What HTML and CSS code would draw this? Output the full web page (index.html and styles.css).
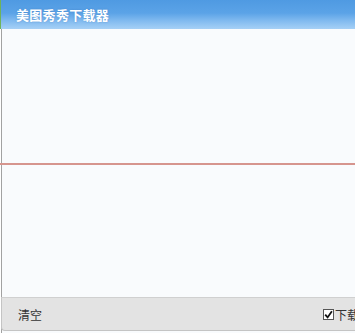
FILE: index.html
```html
<!DOCTYPE html>
<html lang="zh">
<head>
<meta charset="utf-8">
<title>美图秀秀下载器</title>
<link rel="stylesheet" href="styles.css">
</head>
<body>
<div class="window">
  <div class="titlebar"><span class="title">美图秀秀下载器</span></div>
  <div class="content">
    <div class="pane-top"></div>
    <div class="divider"></div>
    <div class="pane-bottom"></div>
    <div class="footer">
      <span class="clear">清空</span>
      <label class="opt"><span class="check"><svg width="9" height="9" viewBox="0 0 9 9"><path d="M1.2 4.6 L3.6 7.4 L7.9 1.2" fill="none" stroke="#111" stroke-width="1.8"/></svg></span><span class="opt-text">下载</span></label>
    </div>
  </div>
</div>
</body>
</html>
```
FILE: styles.css
```css
* { box-sizing: border-box; }
html, body { margin: 0; padding: 0; background: #ffffff; }
body { width: 355px; height: 333px; overflow: hidden; font-family: "Noto Sans CJK SC", "Noto Sans", sans-serif; }
.window { height: 333px; display: flex; flex-direction: column; overflow: hidden; }
.titlebar {
  height: 29px;
  flex-shrink: 0;
  display: flex;
  align-items: center;
  padding-left: 15px;
  border-left: 1px solid #6fb35a;
  background: linear-gradient(to bottom, #4f9ae2 0%, #5ba3e7 45%, #7fb9ef 70%, #a6d0f6 100%);
}
.title { color: #ffffff; font-size: 13px; font-weight: bold; letter-spacing: 0.3px; text-shadow: 0 0 2px rgba(40,90,160,0.4); }
.content {
  flex: 1;
  display: flex;
  flex-direction: column;
  margin-left: 1px;
  border-left: 1px solid #a2a2a2;
  background: #f9fbfd;
}
.pane-top { height: 134px; flex-shrink: 0; }
.divider { height: 2px; background: #d6958e; flex-shrink: 0; margin-left: -2px; }
.pane-bottom { flex: 1; }
.footer {
  height: 34px;
  flex-shrink: 0;
  margin-bottom: 2px;
  margin-left: -1px;
  display: flex;
  align-items: center;
  padding-left: 16px;
  background: #e3e3e3;
  border-top: 1px solid #d0d0d0;
  border-bottom: 1px solid #c4c4c4;
  border-left: 1px solid #c4c4c4;
  border-bottom-left-radius: 4px;
  font-size: 12px;
  color: #333333;
}
.clear { flex: 1; }
.opt { width: 32px; flex-shrink: 0; display: flex; align-items: center; white-space: nowrap; }
.check {
  width: 11px; height: 11px; flex-shrink: 0;
  border: 1px solid #555555;
  background: #ffffff;
  display: flex; align-items: center; justify-content: center;
  margin-right: 1px;
}
.opt-text { color: #333333; }
```
